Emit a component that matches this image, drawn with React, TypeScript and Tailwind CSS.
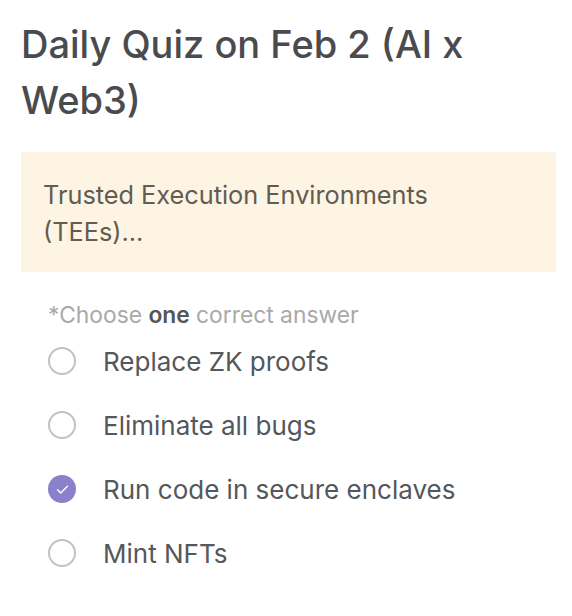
const options = [
  { label: "Replace ZK proofs", checked: false },
  { label: "Eliminate all bugs", checked: false },
  { label: "Run code in secure enclaves", checked: true },
  { label: "Mint NFTs", checked: false },
];

function Radio({ checked }: { checked: boolean }) {
  if (checked) {
    return (
      <span className="flex h-[28px] w-[28px] shrink-0 items-center justify-center rounded-full bg-[#8a80cb]">
        <svg viewBox="0 0 24 24" className="h-[17px] w-[17px]" fill="none" stroke="#fff" strokeWidth="2" strokeLinecap="round" strokeLinejoin="round">
          <path d="M5 12.5l4.5 4.5L19 7.5" />
        </svg>
      </span>
    );
  }
  return <span className="h-[28px] w-[28px] shrink-0 rounded-full border-2 border-[#c2c2c2]" />;
}

export default function App() {
  return (
    <div className="min-h-[616px] w-[572px] bg-white pl-[21px] pr-[16px] pt-[16px] font-['Inter',sans-serif]">
      {/* Title */}
      <h1 className="text-[38px] font-medium leading-[56px] text-[#4a4b4f]">
        Daily Quiz on Feb 2 (AI x Web3)
      </h1>

      {/* Question */}
      <div className="mt-[24px] bg-[#fdf4e3] pb-[22px] pl-[22px] pr-[60px] pt-[24px]">
        <p className="text-[25.3px] leading-[37px] text-[#625c53]">
          Trusted Execution Environments (TEEs)...
        </p>
      </div>

      <p className="mt-[29px] pl-[27px] text-[22.8px] leading-[28px] text-[#a9a9a9]">
        *Choose <span className="font-semibold text-[#55565a]">one</span> correct answer
      </p>

      {/* Options */}
      <div className="flex flex-col pl-[27px]">
        {options.map((o) => (
          <div key={o.label} className="flex h-[64px] items-center gap-[27px]">
            <Radio checked={o.checked} />
            <span className="text-[26px] text-[#54575b]">{o.label}</span>
          </div>
        ))}
      </div>
    </div>
  );
}
